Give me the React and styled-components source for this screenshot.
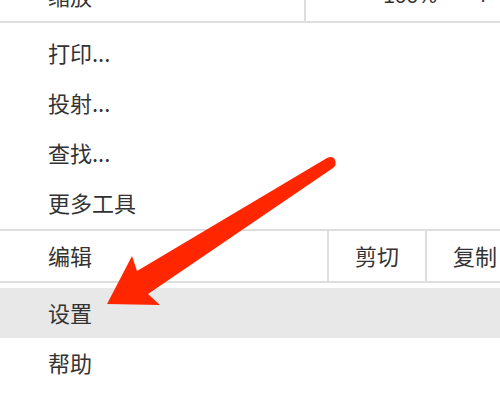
import React from 'react'
import styled, { createGlobalStyle } from 'styled-components'

const GlobalStyle = createGlobalStyle`
  html, body {
    margin: 0;
    padding: 0;
    background: #fff;
    overflow: hidden;
  }
  body {
    font-family: "Noto Sans CJK SC", "Noto Sans", sans-serif;
  }
`

const Page = styled.div`
  position: relative;
  width: 500px;
  height: 395px;
  overflow: hidden;
  background: #fff;
`

const Menu = styled.div`
  margin-top: -29px;
  color: #333;
  font-size: 22px;
  line-height: 1;
`

const SplitRow = styled.div`
  display: flex;
  height: 50px;
  border-bottom: 2px solid #dedede;
  border-top: ${(p) => (p.$top ? '2px solid #dedede' : 'none')};
`

const Label = styled.div`
  width: ${(p) => p.$width}px;
  flex: none;
  display: flex;
  align-items: center;
  padding: 0 0 2px 48px;
  box-sizing: border-box;
`

const Cell = styled.div`
  width: ${(p) => p.$width}px;
  flex: none;
  display: flex;
  align-items: center;
  justify-content: center;
  padding-bottom: 2px;
  border-left: 2px solid #dedede;
  box-sizing: border-box;
`

const ZoomControls = styled.div`
  flex: none;
  width: 220px;
  display: flex;
  align-items: center;
  padding-bottom: 2px;
  border-left: 2px solid #dedede;
  box-sizing: border-box;
`

const ZoomButton = styled.span`
  width: ${(p) => p.$width}px;
  text-align: center;
  font-family: "Liberation Sans", "Noto Sans CJK SC", sans-serif;
  font-size: ${(p) => p.$size || 22}px;
`

const Section = styled.div`
  padding: ${(p) => p.$pad};
`

const Item = styled.div`
  height: 50px;
  box-sizing: border-box;
  display: flex;
  align-items: center;
  padding: 0 0 3px 48px;
  background: ${(p) => (p.$active ? '#e8e8e8' : 'transparent')};
`

const Overlay = styled.svg`
  position: absolute;
  left: 0;
  top: 0;
  pointer-events: none;
`

function Arrow() {
  return (
    <Overlay width="500" height="395" viewBox="0 0 500 395">
      <path
        d="M107 304 L132 256 L137 271 L327 158 Q333 155 335 160 Q337 165 333 168 L148 294 L160 305 Z"
        fill="#ff2600"
      />
      <circle cx="330.5" cy="163" r="4.6" fill="#ff2600" />
    </Overlay>
  )
}

export default function App() {
  return (
    <>
      <GlobalStyle />
      <Page>
        <Menu>
          <SplitRow>
            <Label $width={304}>缩放</Label>
            <ZoomControls>
              <ZoomButton $width={64}>−</ZoomButton>
              <ZoomButton $width={80} $size={21}>100%</ZoomButton>
              <ZoomButton $width={66} $size={26}>+</ZoomButton>
            </ZoomControls>
          </SplitRow>
          <Section $pad="5px 0 1px">
            <Item>打印...</Item>
            <Item>投射...</Item>
            <Item>查找...</Item>
            <Item>更多工具</Item>
          </Section>
          <SplitRow $top>
            <Label $width={327}>编辑</Label>
            <Cell $width={98}>剪切</Cell>
            <Cell $width={98}>复制</Cell>
          </SplitRow>
          <Section $pad="5px 0">
            <Item $active>设置</Item>
            <Item>帮助</Item>
          </Section>
        </Menu>
        <Arrow />
      </Page>
    </>
  )
}
